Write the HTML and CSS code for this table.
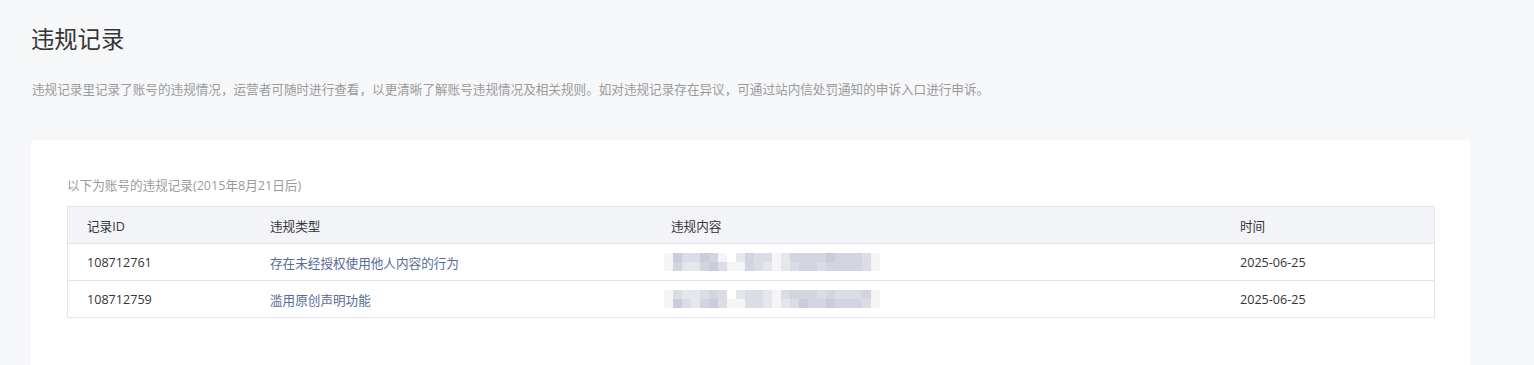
FILE: index.html
```html
<!DOCTYPE html>
<html lang="zh-CN">
<head>
<meta charset="utf-8">
<title>违规记录</title>
<link rel="stylesheet" href="styles.css">
</head>
<body>
<div class="page">
  <h1 class="title">违规记录</h1>
  <p class="desc">违规记录里记录了账号的违规情况，运营者可随时进行查看，以更清晰了解账号违规情况及相关规则。如对违规记录存在异议，可通过站内信处罚通知的申诉入口进行申诉。</p>
  <div class="card">
    <p class="sub">以下为账号的违规记录(2015年8月21日后)</p>
    <div class="table">
      <div class="row head">
        <div class="cell">记录ID</div>
        <div class="cell">违规类型</div>
        <div class="cell">违规内容</div>
        <div class="cell">时间</div>
      </div>
      <div class="row">
        <div class="cell">108712761</div>
        <div class="cell link">存在未经授权使用他人内容的行为</div>
        <div class="cell">
          <div class="blur">
            <div class="line"><i class="s0"></i><i class="s1"></i><i class="s3"></i><i class="s3"></i><i class="s1"></i><i class="s2"></i><i class="s0"></i><i class="s5"></i><i class="s4"></i><i class="s2"></i><i class="s3"></i><i class="s3"></i><i class="s0"></i><i class="s4"></i><i class="s2"></i><i class="s2"></i><i class="s2"></i><i class="s2"></i><i class="s1"></i><i class="s2"></i><i class="s2"></i><i class="s2"></i><i class="s3"></i><i class="s0"></i></div>
            <div class="line"><i class="s0"></i><i class="s2"></i><i class="s4"></i><i class="s4"></i><i class="s2"></i><i class="s1"></i><i class="s3"></i><i class="s0"></i><i class="s0"></i><i class="s2"></i><i class="s3"></i><i class="s4"></i><i class="s0"></i><i class="s4"></i><i class="s3"></i><i class="s2"></i><i class="s2"></i><i class="s3"></i><i class="s2"></i><i class="s2"></i><i class="s2"></i><i class="s2"></i><i class="s3"></i><i class="s0"></i></div>
          </div>
        </div>
        <div class="cell">2025-06-25</div>
      </div>
      <div class="row">
        <div class="cell">108712759</div>
        <div class="cell link">滥用原创声明功能</div>
        <div class="cell">
          <div class="blur">
            <div class="line"><i class="s0"></i><i class="s3"></i><i class="s4"></i><i class="s4"></i><i class="s3"></i><i class="s2"></i><i class="s3"></i><i class="s5"></i><i class="s4"></i><i class="s3"></i><i class="s3"></i><i class="s4"></i><i class="s0"></i><i class="s3"></i><i class="s2"></i><i class="s2"></i><i class="s2"></i><i class="s3"></i><i class="s2"></i><i class="s3"></i><i class="s3"></i><i class="s3"></i><i class="s2"></i><i class="s0"></i></div>
            <div class="line"><i class="s0"></i><i class="s1"></i><i class="s3"></i><i class="s4"></i><i class="s2"></i><i class="s1"></i><i class="s3"></i><i class="s0"></i><i class="s0"></i><i class="s3"></i><i class="s3"></i><i class="s4"></i><i class="s0"></i><i class="s4"></i><i class="s3"></i><i class="s1"></i><i class="s2"></i><i class="s2"></i><i class="s1"></i><i class="s2"></i><i class="s2"></i><i class="s2"></i><i class="s3"></i><i class="s0"></i></div>
          </div>
        </div>
        <div class="cell">2025-06-25</div>
      </div>
    </div>
  </div>
</div>
</body>
</html>
```

FILE: styles.css
```css
html, body {
  margin: 0;
  padding: 0;
}

body {
  background: #f6f7f9;
  font-family: "Open Sans", "Noto Sans CJK SC", sans-serif;
  color: #353535;
}

.page {
  padding: 23px 0 0 31px;
}

.title {
  margin: 0;
  font-size: 23.3px;
  line-height: 32px;
  font-weight: normal;
  color: #353535;
}

.desc {
  margin: 25px 0 0 1px;
  font-size: 12.6px;
  line-height: 20px;
  color: #9b9b9b;
}

.card {
  width: 1439px;
  box-sizing: border-box;
  margin-top: 40px;
  padding: 36px 35px 80px 36px;
  background: #ffffff;
  border-radius: 4px;
}

.sub {
  margin: 0;
  font-size: 12.6px;
  line-height: 20px;
  color: #9b9b9b;
}

.table {
  margin-top: 10px;
  border: 1px solid #e4e5ea;
  font-size: 12.6px;
}

.row {
  display: grid;
  grid-template-columns: 183px 401px 569px 1fr;
  height: 36px;
  border-bottom: 1px solid #e4e5ea;
}

.row:last-child {
  border-bottom: none;
}

.row.head {
  background: #f3f4f7;
}

.cell {
  display: flex;
  align-items: center;
  padding-left: 19px;
  white-space: nowrap;
}

.link {
  color: #576b95;
}

.blur {
  display: flex;
  flex-direction: column;
  margin-left: -7px;
}

.line {
  display: flex;
}

.line i {
  display: block;
  width: 9px;
  height: 9px;
}

.s0 { background: #f5f5f8; }
.s1 { background: #c9ccd9; }
.s2 { background: #d2d5df; }
.s3 { background: #dbdde6; }
.s4 { background: #e6e7ed; }
.s5 { background: #ffffff; }
```
